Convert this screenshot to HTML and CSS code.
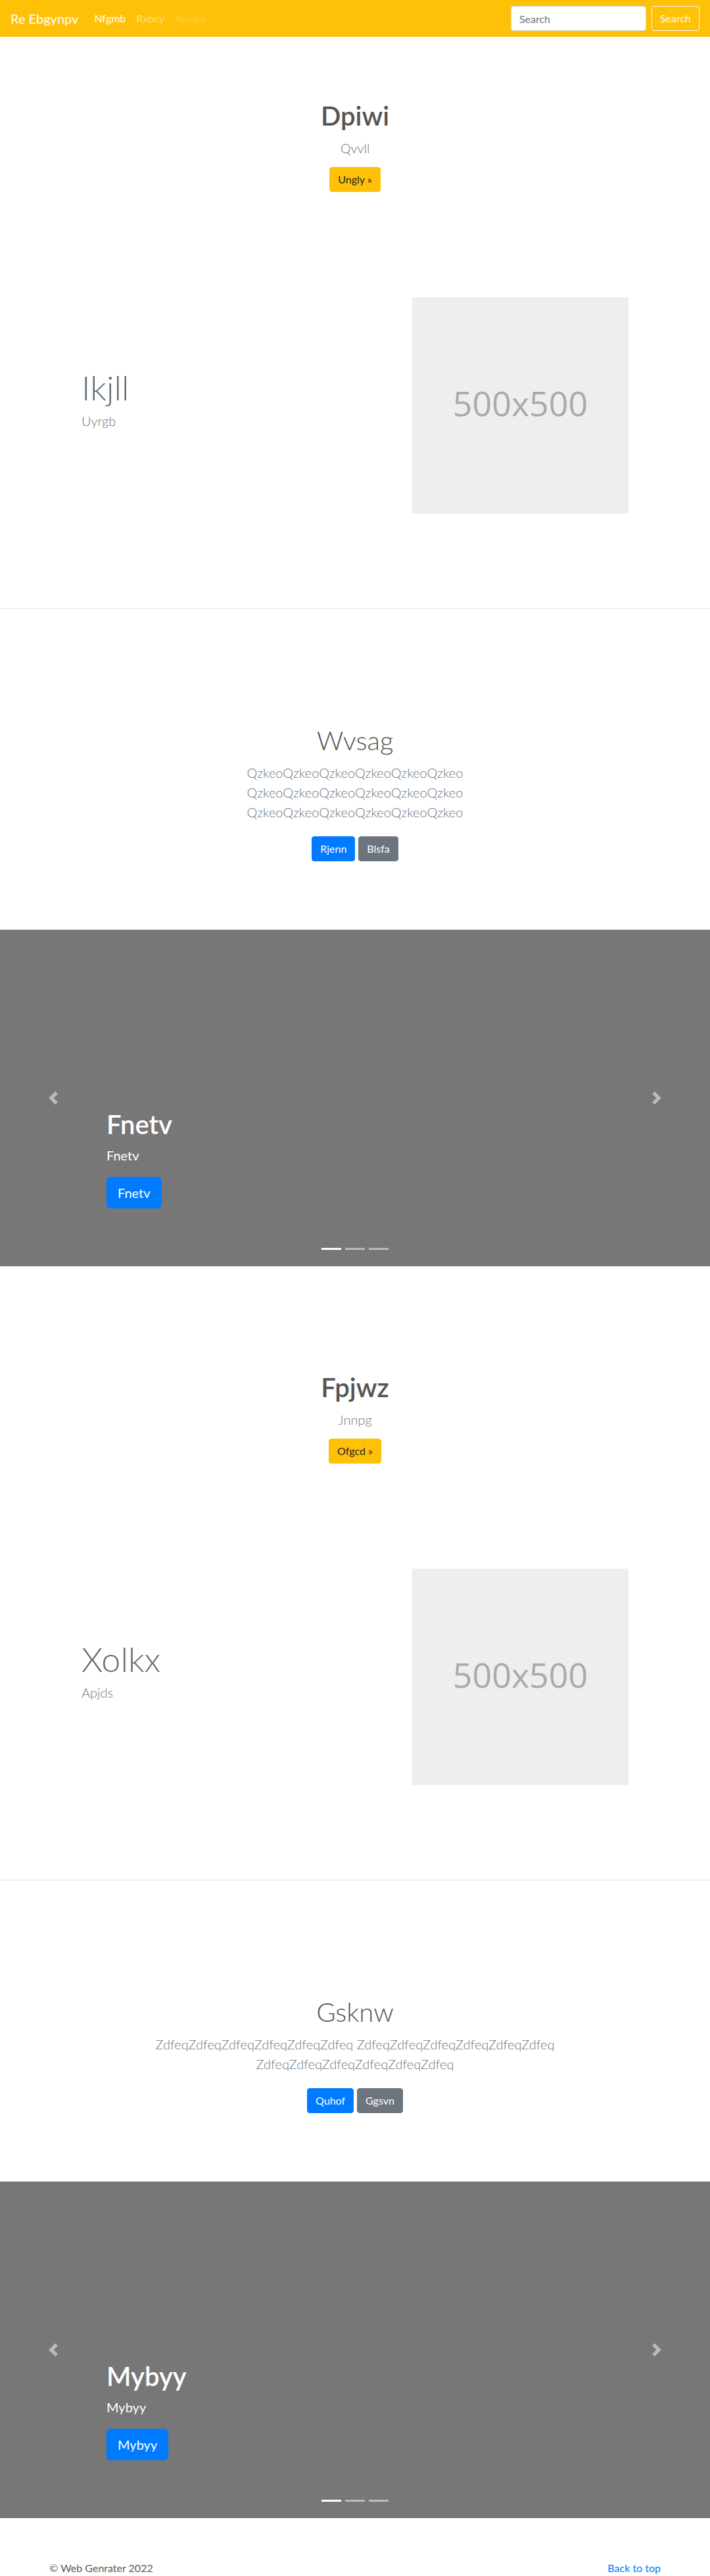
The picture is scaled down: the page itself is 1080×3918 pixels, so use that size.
FILE: index.html
```html
<!DOCTYPE html>
<html lang="en">
<head>
<meta charset="utf-8">
<title>Re Ebgynpv</title>
<link rel="stylesheet" href="styles.css">
</head>
<body>
<header class="navbar">
  <a class="brand" href="#">Re Ebgynpv</a>
  <nav class="nav">
    <a class="nav-link active" href="#">Nfgmb</a>
    <a class="nav-link" href="#">Rxbcy</a>
    <a class="nav-link disabled" href="#">Xwukd</a>
  </nav>
  <form class="search">
    <input class="search-input" type="text" placeholder="Search">
    <button class="btn btn-outline-light" type="button">Search</button>
  </form>
</header>

<main>
  <div class="block">
    <section class="hero">
      <h1 class="hero-title">Dpiwi</h1>
      <p class="lead hero-lead">Qvvll</p>
      <a class="btn btn-warning" href="#">Ungly &raquo;</a>
    </section>

    <section class="featurette">
      <div class="featurette-text">
        <h2 class="featurette-heading">Ikjll</h2>
        <p class="lead featurette-lead">Uyrgb</p>
      </div>
      <div class="placeholder">500x500</div>
    </section>

    <hr class="divider">

    <section class="album">
      <h1 class="album-title">Wvsag</h1>
      <p class="lead album-lead">QzkeoQzkeoQzkeoQzkeoQzkeoQzkeo QzkeoQzkeoQzkeoQzkeoQzkeoQzkeo QzkeoQzkeoQzkeoQzkeoQzkeoQzkeo</p>
      <div class="album-actions">
        <a class="btn btn-primary" href="#">Rjenn</a>
        <a class="btn btn-secondary" href="#">Blsfa</a>
      </div>
    </section>

    <section class="carousel">
      <ol class="indicators">
        <li class="active"></li>
        <li></li>
        <li></li>
      </ol>
      <div class="caption">
        <h1 class="caption-title">Fnetv</h1>
        <p class="caption-text">Fnetv</p>
        <p class="caption-action"><a class="btn btn-primary btn-lg" href="#">Fnetv</a></p>
      </div>
      <a class="control control-prev" href="#"><svg viewBox="0 0 8 8" width="20" height="20"><path fill="#fff" d="M5.25 0l-4 4 4 4 1.5-1.5L4.25 4l2.5-2.5L5.25 0z"/></svg></a>
      <a class="control control-next" href="#"><svg viewBox="0 0 8 8" width="20" height="20"><path fill="#fff" d="M2.75 0l-1.5 1.5L3.75 4l-2.5 2.5L2.75 8l4-4-4-4z"/></svg></a>
    </section>
  </div>

  <div class="block">
    <section class="hero">
      <h1 class="hero-title">Fpjwz</h1>
      <p class="lead hero-lead">Jnnpg</p>
      <a class="btn btn-warning" href="#">Ofgcd &raquo;</a>
    </section>

    <section class="featurette">
      <div class="featurette-text">
        <h2 class="featurette-heading">Xolkx</h2>
        <p class="lead featurette-lead">Apjds</p>
      </div>
      <div class="placeholder">500x500</div>
    </section>

    <hr class="divider">

    <section class="album">
      <h1 class="album-title">Gsknw</h1>
      <p class="lead album-lead">ZdfeqZdfeqZdfeqZdfeqZdfeqZdfeq ZdfeqZdfeqZdfeqZdfeqZdfeqZdfeq ZdfeqZdfeqZdfeqZdfeqZdfeqZdfeq</p>
      <div class="album-actions">
        <a class="btn btn-primary" href="#">Quhof</a>
        <a class="btn btn-secondary" href="#">Ggsvn</a>
      </div>
    </section>

    <section class="carousel">
      <ol class="indicators">
        <li class="active"></li>
        <li></li>
        <li></li>
      </ol>
      <div class="caption">
        <h1 class="caption-title">Mybyy</h1>
        <p class="caption-text">Mybyy</p>
        <p class="caption-action"><a class="btn btn-primary btn-lg" href="#">Mybyy</a></p>
      </div>
      <a class="control control-prev" href="#"><svg viewBox="0 0 8 8" width="20" height="20"><path fill="#fff" d="M5.25 0l-4 4 4 4 1.5-1.5L4.25 4l2.5-2.5L5.25 0z"/></svg></a>
      <a class="control control-next" href="#"><svg viewBox="0 0 8 8" width="20" height="20"><path fill="#fff" d="M2.75 0l-1.5 1.5L3.75 4l-2.5 2.5L2.75 8l4-4-4-4z"/></svg></a>
    </section>
  </div>
</main>

<footer class="footer">
  <p class="copy">&copy; Web Genrater 2022</p>
  <a class="back" href="#">Back to top</a>
</footer>
</body>
</html>
```

FILE: styles.css
```css
* { box-sizing: border-box; }

html, body {
  margin: 0;
  padding: 0;
}

body {
  font-family: Lato, "Liberation Sans", sans-serif;
  font-size: 16px;
  line-height: 1.5;
  color: #5a5a5a;
  background: #fff;
}

a { text-decoration: none; }

/* ---------- navbar ---------- */
.navbar {
  display: flex;
  align-items: center;
  height: 56px;
  padding: 0 16px;
  background: #ffc107;
}

.brand {
  font-size: 20px;
  line-height: 30px;
  padding: 5px 0;
  margin-right: 16px;
  color: #fff;
}

.nav {
  display: flex;
}

.nav-link {
  padding: 8px;
  line-height: 24px;
  color: rgba(255, 255, 255, 0.5);
}

.nav-link.active { color: #fff; }
.nav-link.disabled { color: rgba(255, 255, 255, 0.25); }

.search {
  margin: 0 0 0 auto;
  display: flex;
  align-items: center;
}

.search-input {
  width: 206px;
  height: 38px;
  margin-right: 8px;
  padding: 6px 12px;
  font-family: inherit;
  font-size: 16px;
  color: #495057;
  background: #fff;
  border: 1px solid #ced4da;
  border-radius: 4px;
}

.search-input::placeholder { color: #6c757d; }

/* ---------- buttons ---------- */
.btn {
  display: inline-block;
  font-family: inherit;
  font-size: 16px;
  line-height: 24px;
  padding: 6px 12px;
  border: 1px solid transparent;
  border-radius: 4px;
  cursor: pointer;
  background: transparent;
}

.btn-outline-light {
  color: #f8f9fa;
  border-color: #f8f9fa;
}

.btn-warning {
  color: #212529;
  background: #ffc107;
  border-color: #ffc107;
}

.btn-primary {
  color: #fff;
  background: #007bff;
  border-color: #007bff;
}

.btn-secondary {
  color: #fff;
  background: #6c757d;
  border-color: #6c757d;
}

.btn-lg {
  font-size: 20px;
  line-height: 30px;
  padding: 8px 16px;
  border-radius: 6px;
}

.lead {
  font-size: 20px;
  font-weight: 300;
  line-height: 30px;
  color: #6c757d;
}

/* ---------- hero ---------- */
.hero {
  padding-top: 96px;
  text-align: center;
}

.hero-title {
  margin: 0 0 10px;
  font-size: 40px;
  line-height: 48px;
  font-weight: 600;
  color: #555;
}

.hero-lead {
  margin: 0 0 14px;
}

/* ---------- featurette ---------- */
.featurette {
  margin-top: 160px;
  padding-left: 124px;
  display: grid;
  grid-template-columns: 503px 329px;
  align-items: center;
}

.featurette-heading {
  margin: 0 0 10px;
  font-size: 52px;
  line-height: 52px;
  font-weight: 300;
  color: #646d75;
}

.featurette-lead {
  margin: 0 0 16px;
}

.placeholder {
  width: 329px;
  height: 329px;
  padding-bottom: 8px;
  background: #eee;
  color: #aaa;
  display: flex;
  align-items: center;
  justify-content: center;
  font-family: "Open Sans", "Noto Sans", sans-serif;
  font-size: 52px;
}

.divider {
  margin: 144px 0 0;
  border: 0;
  border-top: 1px solid #e5e5e5;
  height: 0;
}

/* ---------- album ---------- */
.album {
  padding-top: 176px;
  text-align: center;
}

.album-title {
  margin: 0 0 10px;
  font-size: 40px;
  line-height: 48px;
  font-weight: 300;
  color: #555;
}

.album-lead {
  max-width: 628px;
  margin: 0 auto 22px;
}

.album-actions {
  display: flex;
  justify-content: center;
  gap: 5px;
}

/* ---------- carousel ---------- */
.carousel {
  position: relative;
  margin: 104px 0 64px;
  height: 512px;
  background: #777;
}

.indicators {
  position: absolute;
  left: 0;
  right: 0;
  bottom: 25px;
  margin: 0;
  padding: 0;
  list-style: none;
  display: flex;
  justify-content: center;
  gap: 6px;
}

.indicators li {
  width: 30px;
  height: 3px;
  background: rgba(255, 255, 255, 0.5);
}

.indicators li.active { background: #fff; }

.caption {
  position: absolute;
  left: 15%;
  right: 15%;
  bottom: 48px;
  padding: 20px 0;
  color: #fff;
  text-align: left;
}

.caption-title {
  margin: 0 0 8px;
  font-size: 40px;
  line-height: 48px;
  font-weight: 600;
}

.caption-text {
  margin: 0 0 18px;
  font-size: 20px;
  line-height: 30px;
}

.caption-action {
  margin: 0 0 20px;
}

.control {
  position: absolute;
  top: 0;
  bottom: 0;
  width: 15%;
  display: flex;
  align-items: center;
  justify-content: center;
  opacity: 0.5;
}

.control svg { display: block; }
.control-prev { left: 0; }
.control-next { right: 0; }

/* ---------- footer ---------- */
.footer {
  width: 930px;
  margin: 0 auto;
  display: flex;
  justify-content: space-between;
  line-height: 24px;
}

.copy { margin: 0; }

.back { color: #007bff; }
```
